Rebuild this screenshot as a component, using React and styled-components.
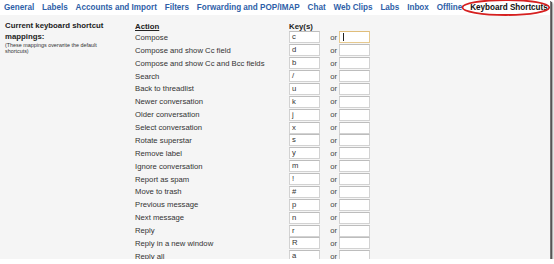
import React from 'react';
import styled, { createGlobalStyle } from "styled-components"

const GlobalStyle = createGlobalStyle`
  html, body { margin: 0; padding: 0; background: #fff; }
  body { font-family: "Liberation Sans", Arial, sans-serif; }
`

const tabs = ["General", "Labels", "Accounts and Import", "Filters", "Forwarding and POP/IMAP", "Chat", "Web Clips", "Labs", "Inbox", "Offline"]

const shortcuts = [
  ["Compose", "c"],
  ["Compose and show Cc field", "d"],
  ["Compose and show Cc and Bcc fields", "b"],
  ["Search", "/"],
  ["Back to threadlist", "u"],
  ["Newer conversation", "k"],
  ["Older conversation", "j"],
  ["Select conversation", "x"],
  ["Rotate superstar", "s"],
  ["Remove label", "y"],
  ["Ignore conversation", "m"],
  ["Report as spam", "!"],
  ["Move to trash", "#"],
  ["Previous message", "p"],
  ["Next message", "n"],
  ["Reply", "r"],
  ["Reply in a new window", "R"],
  ["Reply all", "a"],
]

const App = () => {
  return (
    <>
      <GlobalStyle />
      <Frame>
        <TabBar>
          {tabs.map(t => <Tab key={t}>{t}</Tab>)}
          <Tab active>
            Keyboard Shortcuts
            <Circle viewBox="0 0 92 18" preserveAspectRatio="none">
              <ellipse cx="46" cy="8.5" rx="44.5" ry="7.5" fill="none" stroke="#d62020" strokeWidth="1.8" />
            </Circle>
          </Tab>
        </TabBar>
        <Content>
          <Side>
            <Heading>Current keyboard shortcut mappings:</Heading>
            <Note>(These mappings overwrite the default shortcuts)</Note>
          </Side>
          <Table>
            <HeadCell underline>Action</HeadCell>
            <HeadCell>Key(s)</HeadCell>
            <span />
            <span />
            {shortcuts.map(([label, key], i) => (
              <React.Fragment key={label}>
                <Label>{label}</Label>
                <KeyBox>{key}</KeyBox>
                <Or>or</Or>
                <KeyBox focused={i === 0}>{i === 0 && <Caret />}</KeyBox>
              </React.Fragment>
            ))}
          </Table>
        </Content>
      </Frame>
    </>
  )
};
export default App;

const Frame = styled.div`
  width: 550px;
  height: 259px;
  background: #f5f5f5;
  overflow: hidden;
  box-shadow: 1px 1px 0 #777, 2px 2px 1px #555, 3px 3px 2px rgba(0,0,0,0.35);
`

const TabBar = styled.div`
  height: 15px;
  background: #fff;
  display: flex;
  align-items: center;
  gap: 7.8px;
  padding-left: 4px;
`

const Tab = styled.span`
  position: relative;
  font-size: 8.15px;
  font-weight: bold;
  white-space: nowrap;
  color: ${p => p.active ? "#111" : "#2f5fa8"};
`

const Circle = styled.svg`
  position: absolute;
  left: -9px;
  top: -4px;
  width: calc(100% + 12px);
  height: 18px;
`

const Content = styled.div`
  display: flex;
  padding: 5px 0 0 5px;
`

const Side = styled.div`
  width: 130px;
`

const Heading = styled.div`
  font-size: 7.8px;
  font-weight: bold;
  line-height: 11px;
  color: #222;
  width: 110px;
`

const Note = styled.div`
  font-size: 5.4px;
  line-height: 6px;
  color: #333;
  width: 100px;
`

const Table = styled.div`
  display: grid;
  grid-template-columns: 154px 31px 19px 31px;
  grid-template-rows: 11px;
  grid-auto-rows: 12.88px;
  align-items: center;
`

const HeadCell = styled.div`
  font-size: 7.8px;
  font-weight: bold;
  color: #222;
  align-self: end;
  text-decoration: ${p => p.underline ? "underline" : "none"};
`

const Label = styled.div`
  font-size: 7.7px;
  color: #333;
  white-space: nowrap;
`

const KeyBox = styled.div`
  box-sizing: border-box;
  height: 12px;
  background: #fff;
  border: 1px solid ${p => p.focused ? "#e6c98f" : "#d2d2d2"};
  border-top-color: ${p => p.focused ? "#e0bd7a" : "#bdbdbd"};
  font-size: 7.7px;
  line-height: 10px;
  color: #333;
  padding-left: 2px;
  display: flex;
  align-items: center;
`

const Or = styled.div`
  font-size: 7.7px;
  color: #444;
  text-align: right;
  padding-right: 2px;
`

const Caret = styled.span`
  display: block;
  width: 1px;
  height: 8px;
  background: #222;
  margin-left: 1px;
`
